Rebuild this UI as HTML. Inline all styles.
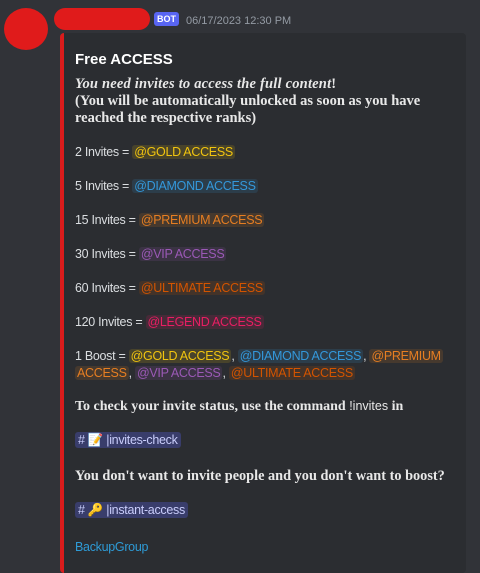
<!DOCTYPE html>
<html><head><style>
body{margin:0;width:480px;height:563px;background:#313338;overflow:hidden;font-family:"Liberation Sans",sans-serif;color:#dbdee1;position:relative}
.av{position:absolute;left:4px;top:8px;width:44px;height:42px;border-radius:50%;background:#e01b1b}
.nm{position:absolute;left:54px;top:8px;width:96px;height:22px;border-radius:11px;background:#e01b1b}
.bot{position:absolute;left:154px;top:12px;background:#5865f2;color:#fff;font-size:9px;padding:2px 3px;border-radius:3px;font-weight:bold}
.ts{position:absolute;left:186px;top:15px;font-size:11px;color:#949ba4}
.emb{position:absolute;left:60px;top:33px;width:402px;height:540px;background:#2b2d31;border-left:4px solid #d91c1c;border-radius:4px}
.t{position:absolute;left:75px;white-space:nowrap;font-size:12.5px;letter-spacing:-0.3px}
.s{font-family:"Liberation Serif",serif;font-weight:bold;font-size:14.5px;letter-spacing:0;color:#e8e8e8}
.m{padding:0 2px;border-radius:3px}
.g{color:#f1c40f;background:rgba(241,196,15,.15)}
.d{color:#3498db;background:rgba(52,152,219,.15)}
.p{color:#e67e22;background:rgba(230,126,34,.15)}
.v{color:#9b59b6;background:rgba(155,89,182,.15)}
.u{color:#d35400;background:rgba(211,84,0,.15)}
.l{color:#e91e63;background:rgba(233,30,99,.15)}
.ch{color:#c9cdfb;background:rgba(88,101,242,.3);padding:1px 3px;border-radius:3px}
</style></head><body>
<div class="av"></div><div class="nm"></div><div class="bot">BOT</div>
<div class="ts">06/17/2023 12:30 PM</div>
<div class="emb"></div>
<div class="t" style="top:51px;font-weight:bold;font-size:15px;letter-spacing:0;color:#fff">Free ACCESS</div>
<div class="t s" style="top:76px;letter-spacing:0.2px"><i>You need invites to access the full content</i>!</div>
<div class="t s" style="top:93px">(You will be automatically unlocked as soon as you have</div>
<div class="t s" style="top:110px">reached the respective ranks)</div>
<div class="t" style="top:145px">2 Invites = <span class="m g">@GOLD ACCESS</span></div>
<div class="t" style="top:179px">5 Invites = <span class="m d">@DIAMOND ACCESS</span></div>
<div class="t" style="top:213px">15 Invites = <span class="m p">@PREMIUM ACCESS</span></div>
<div class="t" style="top:247px">30 Invites = <span class="m v">@VIP ACCESS</span></div>
<div class="t" style="top:281px">60 Invites = <span class="m u">@ULTIMATE ACCESS</span></div>
<div class="t" style="top:315px">120 Invites = <span class="m l">@LEGEND ACCESS</span></div>
<div class="t" style="top:349px">1 Boost = <span class="m g">@GOLD ACCESS</span>, <span class="m d">@DIAMOND ACCESS</span>, <span class="m p">@PREMIUM</span></div>
<div class="t" style="top:366px"><span class="m p">ACCESS</span>, <span class="m v">@VIP ACCESS</span>, <span class="m u">@ULTIMATE ACCESS</span></div>
<div class="t s" style="top:399px;font-size:14px">To check your invite status, use the command <span style="font-family:'Liberation Sans';font-weight:normal;font-size:12.5px">!invites</span> in</div>
<div class="t" style="top:433px"><span class="ch"># 📝 |invites-check</span></div>
<div class="t s" style="top:468px;font-size:14.3px">You don't want to invite people and you don't want to boost?</div>
<div class="t" style="top:503px"><span class="ch"># 🔑 |instant-access</span></div>
<div class="t" style="top:540px;color:#2e9bd6">BackupGroup</div>
</body></html>
